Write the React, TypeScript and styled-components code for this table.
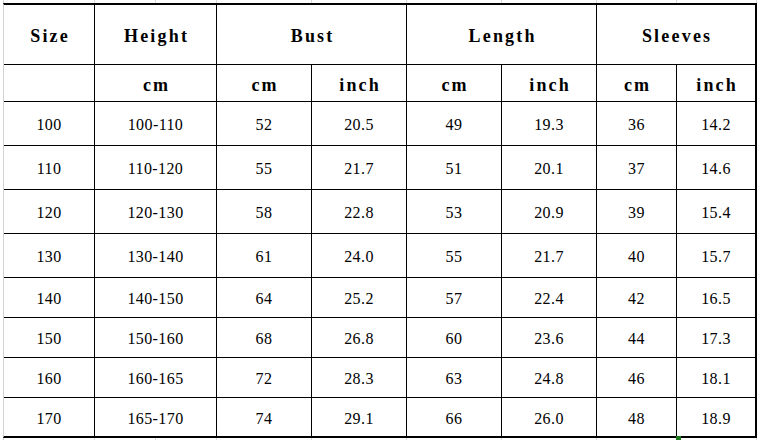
import styled, { createGlobalStyle } from "styled-components";

const GlobalStyle = createGlobalStyle`
  html, body {
    margin: 0;
    padding: 0;
    background: #ffffff;
  }
`;

const COLS = [90, 121, 94, 94, 94, 94, 79, 78];
const SHEET_LINES = [91, 61, 61, 95, 95, 95, 95, 80, 80];

const DATA = [
  ["100", "100-110", "52", "20.5", "49", "19.3", "36", "14.2"],
  ["110", "110-120", "55", "21.7", "51", "20.1", "37", "14.6"],
  ["120", "120-130", "58", "22.8", "53", "20.9", "39", "15.4"],
  ["130", "130-140", "61", "24.0", "55", "21.7", "40", "15.7"],
  ["140", "140-150", "64", "25.2", "57", "22.4", "42", "16.5"],
  ["150", "150-160", "68", "26.8", "60", "23.6", "44", "17.3"],
  ["160", "160-165", "72", "28.3", "63", "24.8", "46", "18.1"],
  ["170", "165-170", "74", "29.1", "66", "26.0", "48", "18.9"],
];

const GROUPS = [
  { label: "Size", span: 1 },
  { label: "Height", span: 1 },
  { label: "Bust", span: 2 },
  { label: "Length", span: 2 },
  { label: "Sleeves", span: 2 },
];

const UNITS = ["", "cm", "cm", "inch", "cm", "inch", "cm", "inch"];

export default function App() {
  return (
    <>
      <GlobalStyle />
      <Sheet>
        <Strip $height={3}>
          {SHEET_LINES.map((w, i) => (
            <StripCell key={i} style={{ width: w }} />
          ))}
        </Strip>
        <Table>
          {GROUPS.map((g) => (
            <GroupCell key={g.label} $span={g.span}>
              {g.label}
            </GroupCell>
          ))}
          {UNITS.map((u, i) => (
            <UnitCell key={i}>{u}</UnitCell>
          ))}
          {DATA.map((row) =>
            row.map((v, i) => <DataCell key={row[0] + i}>{v}</DataCell>)
          )}
        </Table>
        <Strip $height={2}>
          {SHEET_LINES.map((w, i) => (
            <StripCell key={i} style={{ width: w }} />
          ))}
        </Strip>
        <FillHandle />
      </Sheet>
    </>
  );
}

/* ------ STYLE ------ */

const Sheet = styled.div`
  position: relative;
  width: 761px;
  height: 440px;
  overflow: hidden;
  padding-left: 3px;
  box-sizing: border-box;
  background: #ffffff;
`;

const Strip = styled.div<{ $height: number }>`
  display: flex;
  height: ${(p) => p.$height}px;
  border-left: 1px solid #d4d4d4;
`;

const StripCell = styled.div`
  flex: none;
  box-sizing: border-box;
  border-right: 1px solid #d9d9d9;
`;

const Table = styled.div`
  display: grid;
  grid-template-columns: ${COLS.map((c) => c + "px").join(" ")};
  grid-template-rows: 59px 36px repeat(4, 43px) repeat(3, 39px) 38px;
  gap: 1px;
  width: max-content;
  background: #000000;
  border-top: 2px solid #000000;
  border-right: 2px solid #000000;
  border-bottom: 2px solid #000000;
  border-left: 1px solid #d4d4d4;
`;

const Cell = styled.div`
  background: #ffffff;
  color: #000000;
  display: flex;
  align-items: center;
  justify-content: center;
  white-space: nowrap;
`;

const HeadCell = styled(Cell)`
  font-family: "Liberation Serif", "Times New Roman", serif;
  font-weight: bold;
  font-size: 18px;
  letter-spacing: 2.2px;
  text-indent: 2.2px;
`;

const GroupCell = styled(HeadCell)<{ $span: number }>`
  grid-column: span ${(p) => p.$span};
  padding-top: 3px;
`;

const UnitCell = styled(HeadCell)`
  padding-top: 4px;
`;

const DataCell = styled(Cell)`
  font-family: "Liberation Serif", "Times New Roman", serif;
  font-size: 16px;
  letter-spacing: 0.4px;
  padding-top: 3px;
`;

const FillHandle = styled.div`
  position: absolute;
  left: 676px;
  top: 436px;
  width: 5px;
  height: 4px;
  background: #1e7a1e;
`;
